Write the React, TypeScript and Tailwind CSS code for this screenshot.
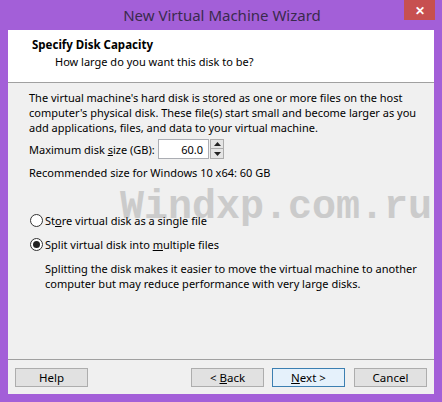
import { ReactNode } from 'react'

function Btn({ children, primary }: { children: ReactNode; primary?: boolean }) {
    return <div className={`w-[73px] h-[19px] flex items-center justify-center text-[11.5px] text-black border whitespace-pre ${primary ? 'border-[#3c7fb1] bg-[#e5f1fb]' : 'border-[#adadad] bg-[#e1e1e1]'}`}>
        {children}
    </div>
}

function Radio({ checked, children }: { checked?: boolean; children: ReactNode }) {
    return <div className="flex items-center h-[13px]">
        <div className="w-[13px] h-[13px] rounded-full border border-[#333] bg-white flex items-center justify-center">
            {checked && <div className="w-[7px] h-[7px] rounded-full bg-[#222]" />}
        </div>
        <span className="ml-[2px]">{children}</span>
    </div>
}

export default function App() {
    return <div className="w-[442px] h-[402px] bg-[#a35fd8] flex flex-col text-[11px] leading-[15px] text-black whitespace-nowrap" style={{ fontFamily: '"Noto Sans", sans-serif' }}>
        {/* title bar */}
        <div className="h-[30px] flex items-start relative">
            <div className="flex-1 text-center text-[15px] leading-[30px] text-[#3a2a4d] pl-[2px]">New Virtual Machine Wizard</div>
            <div className="absolute right-[7px] top-0 w-[31px] h-[20px] bg-[#c75050] flex items-center justify-center text-white text-[12px] font-bold">✕</div>
        </div>

        <div className="mx-[8px] flex-1 flex flex-col">
            {/* header */}
            <div className="h-[53px] bg-white border-b border-[#a0a0a0] pl-[24px] pt-[7px]">
                <div className="font-bold text-[11.5px]">Specify Disk Capacity</div>
                <div className="pl-[23px] mt-[2px]">How large do you want this disk to be?</div>
            </div>

            {/* body */}
            <div className="flex-1 bg-[#f0f0f0] flex flex-col">
                <div className="flex-1 pl-[21px] pt-[7px]">
                    <p>The virtual machine's hard disk is stored as one or more files on the host<br />computer's physical disk. These file(s) start small and become larger as you<br />add applications, files, and data to your virtual machine.</p>

                    <div className="flex items-center mt-[4px]">
                        <span className="w-[129px]">Maximum disk <u>s</u>ize (GB):</span>
                        <div className="w-[51px] h-[20px] bg-white border border-[#abadb3] flex items-center justify-end pr-[5px]">60.0</div>
                        <div className="flex flex-col ml-[1px]">
                            <div className="w-[14px] h-[10px] border border-[#acacac] bg-[#e5e5e5] flex items-center justify-center">
                                <svg width="7" height="4" viewBox="0 0 7 4"><path d="M3.5 0L7 4H0z" fill="#222" /></svg>
                            </div>
                            <div className="w-[14px] h-[10px] border border-t-0 border-[#acacac] bg-[#e5e5e5] flex items-center justify-center">
                                <svg width="7" height="4" viewBox="0 0 7 4"><path d="M0 0H7L3.5 4z" fill="#222" /></svg>
                            </div>
                        </div>
                    </div>

                    <div className="mt-[6px]">Recommended size for Windows 10 x64: 60 GB</div>

                    <div className="pl-[91px] mt-[6px] h-[30px] text-[40px] leading-[44px] font-bold text-[#cbcbcb]" style={{ fontFamily: '"Liberation Mono", monospace' }}>Windxp.com.ru</div>

                    <div className="flex flex-col gap-[11px] mt-[-2px] pl-[1px]">
                        <Radio>St<u>o</u>re virtual disk as a single file</Radio>
                        <Radio checked>Split virtual disk into <u>m</u>ultiple files</Radio>
                    </div>
                    <p className="pl-[16px] mt-[10px]">Splitting the disk makes it easier to move the virtual machine to another<br />computer but may reduce performance with very large disks.</p>
                </div>

                {/* footer */}
                <div className="border-t border-[#a0a0a0] h-[35px] flex items-start pt-[8px] px-[7px]">
                    <Btn>Help</Btn>
                    <div className="flex-1" />
                    <div className="flex gap-[8px]">
                        <Btn>{'< '}<u>B</u>ack</Btn>
                        <Btn primary><u>N</u>ext{' >'}</Btn>
                        <div className="ml-[1px]"><Btn>Cancel</Btn></div>
                    </div>
                </div>
            </div>
        </div>
        <div className="h-[8px]" />
    </div>
}
